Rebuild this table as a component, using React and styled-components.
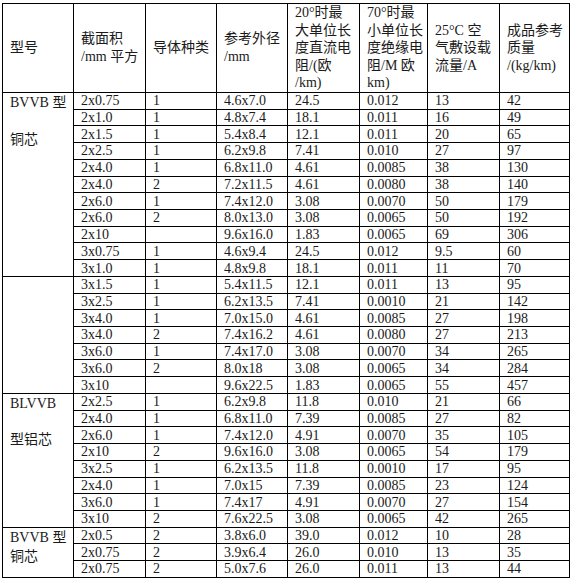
import React from "react";
import styled, { createGlobalStyle } from "styled-components";

const Global = createGlobalStyle`
  html, body { margin: 0; padding: 0; background: #fff; }
  body { font-family: "Liberation Serif", "Noto Sans CJK SC", serif; }
`;

const Page = styled.div`
  padding: 3px 0 0 2px;
`;

const Table = styled.table`
  border-collapse: collapse;
  table-layout: fixed;
  width: 568px;
  font-family: "Liberation Serif", "Noto Sans CJK SC", serif;
  font-size: 14px;
  color: #1a1a1a;
`;

const HeadCell = styled.th`
  border: 1px solid #000;
  text-align: left;
  font-weight: normal;
  vertical-align: middle;
  padding: 0 2px 0 7px;
  line-height: 17.6px;
  height: 88px;
  box-sizing: border-box;
`;

const Cell = styled.td`
  border: 1px solid #000;
  padding: 0 2px 0 7px;
  line-height: 15px;
  white-space: nowrap;
  vertical-align: middle;
`;

const ModelCell = styled.td`
  border: 1px solid #000;
  padding: 1px 2px 0 7px;
  vertical-align: top;
  line-height: 17px;
  white-space: nowrap;
`;

const ModelLine = styled.div`
  margin-top: ${(p) => p.$gap || 0}px;
`;

const Row = styled.tr`
  height: 16.72px;
`;

const widths = [71, 72, 71, 71, 72, 68, 72, 70];

const headers = [
  ["型号"],
  ["截面积", "/mm 平方"],
  ["导体种类"],
  ["参考外径", "/mm"],
  ["20°时最", "大单位长", "度直流电", "阻/(欧", "/km)"],
  ["70°时最", "小单位长", "度绝缘电", "阻/M 欧", "km)"],
  ["25°C 空", "气敷设载", "流量/A"],
  ["成品参考", "质量", "/(kg/km)"],
];

const groups = [
  {
    model: ["BVVB 型", "铜芯"],
    gap: 20,
    rows: [
      ["2x0.75", "1", "4.6x7.0", "24.5", "0.012", "13", "42"],
      ["2x1.0", "1", "4.8x7.4", "18.1", "0.011", "16", "49"],
      ["2x1.5", "1", "5.4x8.4", "12.1", "0.011", "20", "65"],
      ["2x2.5", "1", "6.2x9.8", "7.41", "0.010", "27", "97"],
      ["2x4.0", "1", "6.8x11.0", "4.61", "0.0085", "38", "130"],
      ["2x4.0", "2", "7.2x11.5", "4.61", "0.0080", "38", "140"],
      ["2x6.0", "1", "7.4x12.0", "3.08", "0.0070", "50", "179"],
      ["2x6.0", "2", "8.0x13.0", "3.08", "0.0065", "50", "192"],
      ["2x10", "", "9.6x16.0", "1.83", "0.0065", "69", "306"],
      ["3x0.75", "1", "4.6x9.4", "24.5", "0.012", "9.5", "60"],
      ["3x1.0", "1", "4.8x9.8", "18.1", "0.011", "11", "70"],
    ],
  },
  {
    model: [],
    rows: [
      ["3x1.5", "1", "5.4x11.5", "12.1", "0.011", "13", "95"],
      ["3x2.5", "1", "6.2x13.5", "7.41", "0.0010", "21", "142"],
      ["3x4.0", "1", "7.0x15.0", "4.61", "0.0085", "27", "198"],
      ["3x4.0", "2", "7.4x16.2", "4.61", "0.0080", "27", "213"],
      ["3x6.0", "1", "7.4x17.0", "3.08", "0.0070", "34", "265"],
      ["3x6.0", "2", "8.0x18", "3.08", "0.0065", "34", "284"],
      ["3x10", "", "9.6x22.5", "1.83", "0.0065", "55", "457"],
    ],
  },
  {
    model: ["BLVVB", "型铝芯"],
    gap: 19,
    rows: [
      ["2x2.5", "1", "6.2x9.8", "11.8", "0.010", "21", "66"],
      ["2x4.0", "1", "6.8x11.0", "7.39", "0.0085", "27", "82"],
      ["2x6.0", "1", "7.4x12.0", "4.91", "0.0070", "35", "105"],
      ["2x10", "2", "9.6x16.0", "3.08", "0.0065", "54", "179"],
      ["3x2.5", "1", "6.2x13.5", "11.8", "0.0010", "17", "95"],
      ["2x4.0", "1", "7.0x15", "7.39", "0.0085", "23", "124"],
      ["3x6.0", "1", "7.4x17", "4.91", "0.0070", "27", "154"],
      ["3x10", "2", "7.6x22.5", "3.08", "0.0065", "42", "265"],
    ],
  },
  {
    model: ["BVVB 型", "铜芯"],
    gap: 2,
    rows: [
      ["2x0.5", "2", "3.8x6.0", "39.0", "0.012", "10", "28"],
      ["2x0.75", "2", "3.9x6.4", "26.0", "0.010", "13", "35"],
      ["2x0.75", "2", "5.0x7.6", "26.0", "0.011", "13", "44"],
    ],
  },
];

export default function App() {
  return (
    <>
      <Global />
      <Page>
        <Table>
          <colgroup>
            {widths.map((w, i) => (
              <col key={i} style={{ width: w }} />
            ))}
          </colgroup>
          <thead>
            <tr>
              {headers.map((lines, i) => (
                <HeadCell key={i}>
                  {lines.map((l, j) => (
                    <div key={j}>{l}</div>
                  ))}
                </HeadCell>
              ))}
            </tr>
          </thead>
          <tbody>
            {groups.map((g, gi) =>
              g.rows.map((r, ri) => (
                <Row key={`${gi}-${ri}`}>
                  {ri === 0 && (
                    <ModelCell rowSpan={g.rows.length}>
                      {g.model.map((m, mi) => (
                        <ModelLine key={mi} $gap={mi > 0 ? g.gap : 0}>
                          {m}
                        </ModelLine>
                      ))}
                    </ModelCell>
                  )}
                  {r.map((c, ci) => (
                    <Cell key={ci}>{c}</Cell>
                  ))}
                </Row>
              ))
            )}
          </tbody>
        </Table>
      </Page>
    </>
  );
}
